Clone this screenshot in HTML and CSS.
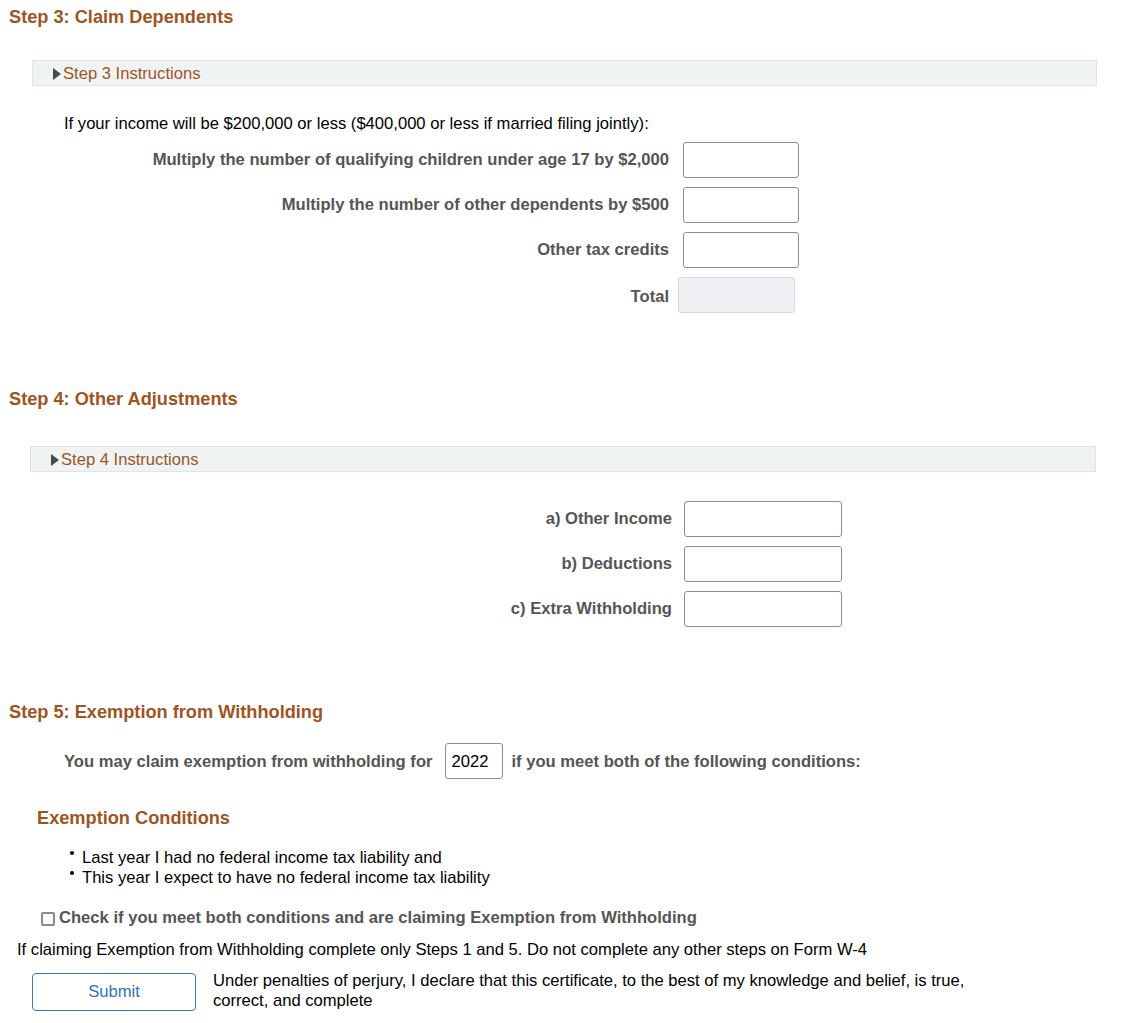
FILE: index.html
```html
<!DOCTYPE html>
<html lang="en">
<head>
<meta charset="utf-8">
<title>W-4 Steps 3-5</title>
<link rel="stylesheet" href="styles.css">
</head>
<body>
<div class="page">
  <h2 class="step-title">Step 3: Claim Dependents</h2>
  <div class="instr-bar bar-s3"><span class="tri"></span><span class="instr-text">Step 3 Instructions</span></div>
  <p class="intro">If your income will be $200,000 or less ($400,000 or less if married filing jointly):</p>
  <div class="fields fields-s3">
    <div class="field-row"><label class="field-label">Multiply the number of qualifying children under age 17 by $2,000</label><input class="field-input" type="text"></div>
    <div class="field-row"><label class="field-label">Multiply the number of other dependents by $500</label><input class="field-input" type="text"></div>
    <div class="field-row"><label class="field-label">Other tax credits</label><input class="field-input" type="text"></div>
    <div class="field-row"><label class="field-label label-total">Total</label><div class="field-display"></div></div>
  </div>

  <h2 class="step-title title-s4">Step 4: Other Adjustments</h2>
  <div class="instr-bar bar-s4"><span class="tri"></span><span class="instr-text">Step 4 Instructions</span></div>
  <div class="fields fields-s4">
    <div class="field-row"><label class="field-label">a) Other Income</label><input class="field-input" type="text"></div>
    <div class="field-row"><label class="field-label">b) Deductions</label><input class="field-input" type="text"></div>
    <div class="field-row"><label class="field-label">c) Extra Withholding</label><input class="field-input" type="text"></div>
  </div>

  <h2 class="step-title title-s5">Step 5: Exemption from Withholding</h2>
  <div class="year-row">
    <span class="strong-label">You may claim exemption from withholding for</span>
    <input class="year-input" type="text" value="2022">
    <span class="strong-label">if you meet both of the following conditions:</span>
  </div>
  <h3 class="sub-title">Exemption Conditions</h3>
  <ul class="cond-list">
    <li>Last year I had no federal income tax liability and</li>
    <li>This year I expect to have no federal income tax liability</li>
  </ul>
  <div class="check-row">
    <input class="check" type="checkbox" id="exempt">
    <label class="strong-label" for="exempt">Check if you meet both conditions and are claiming Exemption from Withholding</label>
  </div>
  <p class="claim-note">If claiming Exemption from Withholding complete only Steps 1 and 5. Do not complete any other steps on Form W-4</p>
  <div class="submit-row">
    <button class="submit-btn" type="button">Submit</button>
    <p class="perjury">Under penalties of perjury, I declare that this certificate, to the best of my knowledge and belief, is true, correct, and complete</p>
  </div>
</div>
</body>
</html>
```
FILE: styles.css
```css
body {
  margin: 0;
  background: #fff;
  color: #000;
  font-family: "Liberation Sans", Arial, sans-serif;
  font-size: 16.6px;
}
.page {
  padding-top: 6px;
}
.step-title {
  margin: 0 0 0 9px;
  font-size: 18.2px;
  line-height: 22px;
  font-weight: bold;
  color: #a0541f;
}
.title-s4 { margin-top: 75px; }
.title-s5 { margin-top: 74px; }

.instr-bar {
  box-sizing: border-box;
  height: 26px;
  display: flex;
  align-items: center;
  background: #f0f3f4;
  border: 1px solid #e1e4e6;
  padding: 1px 0 0 19px;
}
.bar-s3 { margin: 32px 0 0 32px; width: 1065px; }
.bar-s4 { margin: 36px 0 0 30px; width: 1066px; }
.tri {
  width: 0;
  height: 0;
  border-left: 8px solid #4a4a4a;
  border-top: 6px solid transparent;
  border-bottom: 6px solid transparent;
  margin: 0 2px 0 1px;
}
.instr-text {
  color: #a0541f;
  line-height: 20px;
}

.intro {
  margin: 28px 0 0 64px;
  line-height: 20px;
}

.fields {
  display: flex;
  flex-direction: column;
  gap: 9px;
}
.fields-s3 { margin-top: 8px; }
.fields-s4 { margin-top: 29px; }
.field-row {
  display: flex;
  align-items: center;
  height: 36px;
}
.field-label {
  font-weight: bold;
  color: #555;
  text-align: right;
  line-height: 20px;
}
.label-total { padding-top: 4px; }
.fields-s3 .field-label { width: 669px; margin-right: 14px; }
.fields-s4 .field-label { width: 672px; margin-right: 12px; }
.field-input {
  box-sizing: border-box;
  height: 36px;
  border: 1px solid #8a8f94;
  border-radius: 3px;
  background: #fff;
  padding: 0 6px;
  font: inherit;
}
.fields-s3 .field-input { width: 116px; }
.fields-s4 .field-input { width: 158px; }
.field-display {
  box-sizing: border-box;
  width: 117px;
  height: 36px;
  margin-left: -5px;
  background: #eef0f3;
  border: 1px solid #d9dbde;
  border-radius: 3px;
}

.strong-label {
  font-weight: bold;
  color: #555;
  line-height: 20px;
}
.year-row {
  display: flex;
  align-items: center;
  margin: 20px 0 0 64px;
  height: 36px;
}
.year-row .strong-label { padding-top: 2px; }
.year-input {
  box-sizing: border-box;
  width: 58px;
  height: 36px;
  margin: 0 8px 0 13px;
  border: 1px solid #8a8f94;
  border-radius: 3px;
  padding: 2px 0 0 5px;
  font: inherit;
  color: #000;
}

.sub-title {
  margin: 28px 0 0 37px;
  font-size: 18.2px;
  line-height: 22px;
  font-weight: bold;
  color: #a0541f;
}
.cond-list {
  list-style: none;
  margin: 19px 0 0 70px;
  padding: 0;
}
.cond-list li {
  line-height: 20px;
}
.cond-list li::before {
  content: "";
  display: inline-block;
  width: 4px;
  height: 4px;
  border-radius: 50%;
  background: #000;
  vertical-align: 8px;
  margin-right: 8px;
}

.check-row {
  display: flex;
  align-items: center;
  margin: 20px 0 0 41px;
  height: 20px;
}
.check {
  appearance: none;
  -webkit-appearance: none;
  box-sizing: border-box;
  width: 14px;
  height: 14px;
  margin: 2px 4px 0 0;
  border: 2px solid #8a8a8a;
  border-radius: 2px;
  background: #fff;
}

.claim-note {
  margin: 12px 0 0 17px;
  line-height: 20px;
}

.submit-row {
  display: flex;
  align-items: flex-start;
  margin: 11px 0 0 32px;
}
.submit-btn {
  box-sizing: border-box;
  width: 164px;
  height: 38px;
  margin-top: 2px;
  background: #fff;
  border: 1px solid #3b78bd;
  border-radius: 4px;
  color: #2f72bd;
  font: inherit;
}
.perjury {
  margin: 0 0 0 17px;
  max-width: 780px;
  line-height: 20px;
}
```
